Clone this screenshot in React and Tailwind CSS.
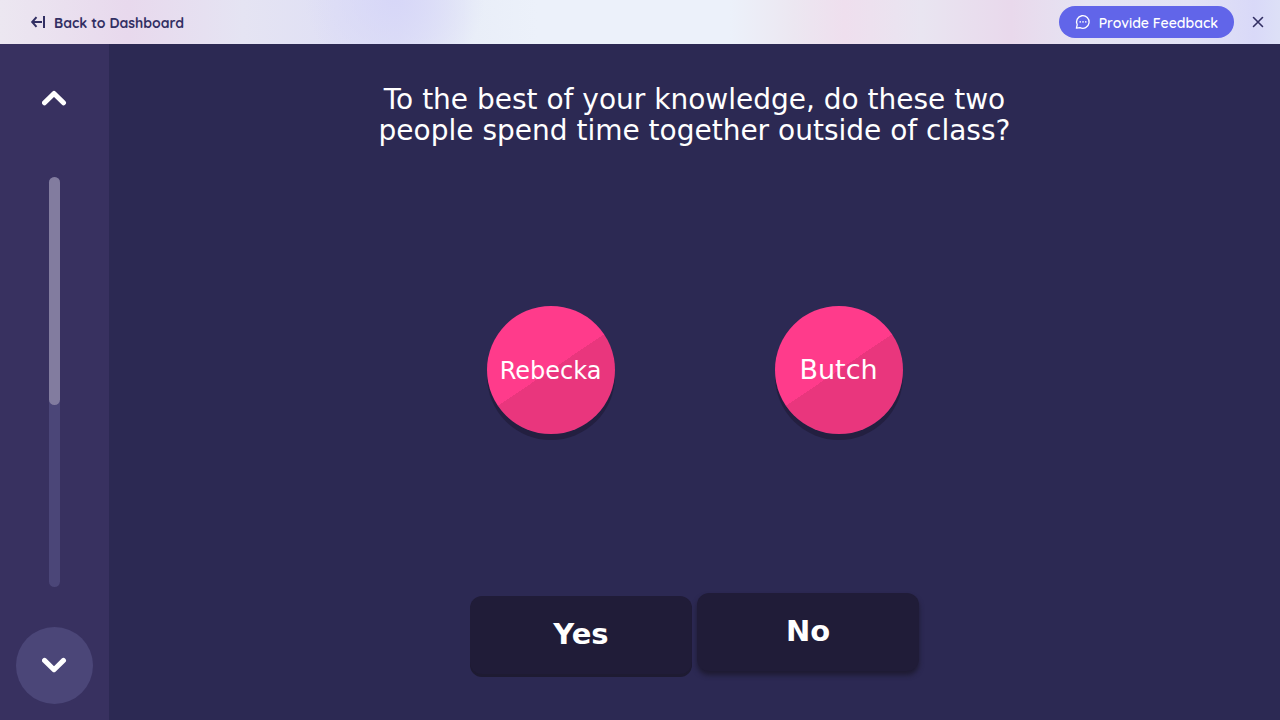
import React from "react";

function BackIcon() {
  return (
    <svg width="16" height="14" viewBox="0 0 16 14" fill="none" stroke="currentColor" strokeWidth="2" aria-hidden="true">
      <path d="M6.5 2.2 2.2 7l4.3 4.8M2.2 7H12M14 1v12" />
    </svg>
  );
}

function ChatIcon() {
  return (
    <svg width="16" height="16" viewBox="0 0 16 16" fill="none" stroke="currentColor" strokeWidth="1.3" strokeLinecap="round" strokeLinejoin="round" aria-hidden="true">
      <path d="M1.4 14.2 2.2 10.8A6.3 6.3 0 1 1 5 13.6Z" />
      <g fill="currentColor" stroke="none">
        <circle cx="5.2" cy="7.9" r=".8" />
        <circle cx="8" cy="7.9" r=".8" />
        <circle cx="10.8" cy="7.9" r=".8" />
      </g>
    </svg>
  );
}

function CloseIcon() {
  return (
    <svg width="12" height="12" viewBox="0 0 12 12" fill="none" stroke="currentColor" strokeWidth="1.6" strokeLinecap="round" aria-hidden="true">
      <path d="M1.5 1.5l9 9M10.5 1.5l-9 9" />
    </svg>
  );
}

function Chevron({ up }) {
  return (
    <svg width="25" height="17" viewBox="0 0 25 17" fill="none" stroke="currentColor" strokeWidth="5" strokeLinecap="round" strokeLinejoin="round" aria-hidden="true">
      <path d={up ? "M2.5 12.8 12 3.5l9.5 9.3" : "M2.5 3.4l9.5 9.3 9.5-9.3"} />
    </svg>
  );
}

function Person({ name, size }) {
  return (
    <div className="flex size-32 items-center justify-center rounded-full bg-[linear-gradient(146deg,#ff3b8b_50%,#e9367d_50%)] pt-0.5 shadow-[0_6px_0_#231f40]">
      <span className={size}>{name}</span>
    </div>
  );
}

export default function App() {
  return (
    <div className="flex min-h-screen flex-col bg-[#2c2953] font-['DejaVu_Sans',sans-serif] text-white">
      <header className="flex h-11 items-center justify-between bg-[radial-gradient(ellipse_90px_80px_at_395px_0px,#d7d7f8_0%,#d7d7f880_50%,#d7d7f800_100%),linear-gradient(90deg,#ece7f1_0%,#e8d9ed_10%,#e5e4f3_19%,#e0e0f5_26%,#dedff6_31%,#e9eef8_37%,#ecf1fa_42%,#ecf1fa_57%,#ece7f1_62%,#efdfee_66%,#e9e5f1_72%,#e9d9ec_79%,#e5e4f3_85%,#e2e2f5_93%,#d9d9f8_98%,#dde0f7_100%)] pr-3.5 pl-[30px] font-['Quicksand','Lato',sans-serif] text-sm leading-5 text-[#322f63]">
        <a href="#dashboard" className="flex items-center gap-2 font-bold">
          <BackIcon />
          <span className="pt-0.5">Back to Dashboard</span>
        </a>
        <div className="flex items-center gap-4">
          <button type="button" className="flex h-8 items-center gap-2 rounded-full bg-[#6165e9] px-4 font-semibold text-white">
            <ChatIcon />
            <span className="pt-0.5">Provide Feedback</span>
          </button>
          <button type="button" aria-label="Close" className="p-0.5">
            <CloseIcon />
          </button>
        </div>
      </header>

      <div className="flex flex-1">
        <nav aria-label="Questions" className="flex w-[109px] shrink-0 flex-col items-center gap-10 bg-[#383160] py-4">
          <button type="button" aria-label="Previous question" className="flex size-[77px] items-center justify-center rounded-full">
            <Chevron up />
          </button>
          <div className="w-[11px] flex-1 rounded-full bg-[#4b4678]">
            <div className="h-[228px] rounded-full bg-[#827c9f]" />
          </div>
          <button type="button" aria-label="Next question" className="flex size-[77px] items-center justify-center rounded-full bg-[#4b4678]">
            <Chevron />
          </button>
        </nav>

        <main className="flex flex-1 flex-col items-center justify-between pt-10 pb-[46px]">
          <h1 className="max-w-[660px] text-center text-[28px] leading-[31px]">
            To the best of your knowledge, do these two people spend time together outside of class?
          </h1>
          <div className="flex gap-40">
            <Person name="Rebecka" size="text-2xl" />
            <Person name="Butch" size="text-[27px]" />
          </div>
          <div className="flex items-end gap-[5px] text-[29px] font-bold">
            <button type="button" className="h-[78px] w-[222px] rounded-xl bg-[#201c38] shadow-[0_3px_0_#1e1b32]">
              Yes
            </button>
            <button type="button" className="mb-[3px] h-[78px] w-[222px] rounded-xl bg-[#201c38] shadow-[0_4px_5px_#1e1b32]">
              No
            </button>
          </div>
        </main>
      </div>
    </div>
  );
}
